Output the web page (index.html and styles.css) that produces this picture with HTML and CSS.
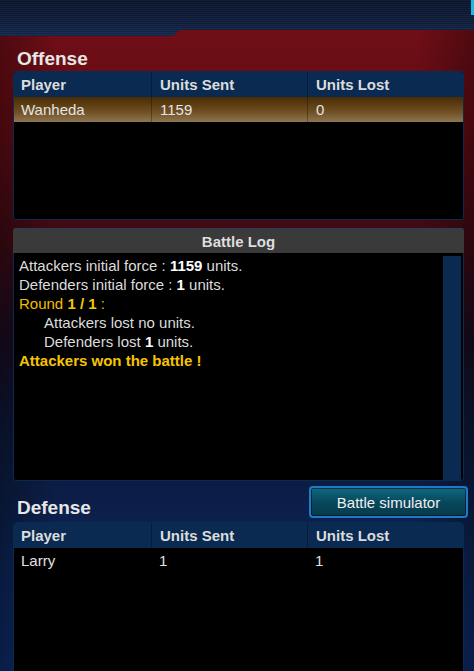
FILE: index.html
```html
<!DOCTYPE html>
<html lang="en">
<head>
    <meta charset="UTF-8">
    <meta name="viewport" content="width=device-width, initial-scale=1.0">
    <title>Battle Report</title>
    <link rel="stylesheet" href="styles.css">
</head>
<body>
    <div class="topbar"><span class="topbar-tab"></span></div>

    <div class="report">
        <h2 class="section-title">Offense</h2>
        <div class="units-table offense">
            <div class="units-row head">
                <div>Player</div>
                <div>Units Sent</div>
                <div>Units Lost</div>
            </div>
            <div class="units-row attacker">
                <div>Wanheda</div>
                <div>1159</div>
                <div>0</div>
            </div>
        </div>

        <div class="battle-log">
            <div class="battle-log-head">Battle Log</div>
            <div class="battle-log-body">
                <div class="log-lines">
                    <p>Attackers initial force : <b>1159</b> units.</p>
                    <p>Defenders initial force : <b>1</b> units.</p>
                    <p class="round">Round <b>1 / 1</b> :</p>
                    <p class="indent">Attackers lost no units.</p>
                    <p class="indent">Defenders lost <b>1</b> units.</p>
                    <p class="result">Attackers won the battle !</p>
                </div>
                <div class="log-scroll"></div>
            </div>
        </div>

        <div class="defense-bar">
            <h2 class="section-title">Defense</h2>
            <button class="sim-button" type="button">Battle simulator</button>
        </div>
        <div class="units-table defense">
            <div class="units-row head">
                <div>Player</div>
                <div>Units Sent</div>
                <div>Units Lost</div>
            </div>
            <div class="units-row">
                <div>Larry</div>
                <div>1</div>
                <div>1</div>
            </div>
        </div>
    </div>
</body>
</html>
```

FILE: styles.css
```css
html, body {
    margin: 0;
    height: 100%;
}
body {
    font-family: "Liberation Sans", Arial, sans-serif;
    color: #e2e2e2;
    overflow: hidden;
    background:
        linear-gradient(to right, rgba(0,0,0,0.3), rgba(0,0,0,0) 12%, rgba(0,0,0,0) 88%, rgba(0,0,0,0.3)),
        linear-gradient(to bottom, #700e16 30px, #600b13 130px, #3a0a14 250px, #180c20 340px, #0c1838 430px, #0c2456 560px, #0c2a66 671px);
}
.topbar {
    position: relative;
    height: 36px;
    background:
        repeating-linear-gradient(to bottom, rgba(255,255,255,0.03) 0 1px, rgba(0,0,0,0.08) 1px 2px),
        linear-gradient(to bottom, #0b1630, #0f1e3c 60%, #15294f);
    clip-path: polygon(0 0, 100% 0, 100% 30px, 180px 30px, 173px 36px, 0 36px);
}
.topbar-tab {
    position: absolute;
    right: 0;
    top: 0;
    width: 3px;
    height: 15px;
    background: #1bb8ea;
}
.report {
    padding: 0 10px 0 13px;
}
.section-title {
    margin: 12px 0 1px 4px;
    font-size: 19px;
    line-height: 22px;
    font-weight: bold;
    color: #e6e6e6;
}
.units-table {
    background: #000;
    border: 1px solid #0b2a52;
    border-radius: 3px;
    overflow: hidden;
    box-sizing: border-box;
}
.units-table.offense {
    height: 149px;
}
.units-table.defense {
    height: 160px;
}
.units-row {
    display: grid;
    grid-template-columns: 137px 156px 1fr;
    height: 25px;
    font-size: 15px;
    line-height: 25px;
}
.units-row div {
    padding-left: 7px;
}
.units-row div + div {
    padding-left: 8px;
}
.units-row.head {
    background: #0a2a52;
    font-weight: bold;
    color: #dcdcdc;
}
.units-row.head div + div,
.units-row.attacker div + div {
    border-left: 1px solid rgba(0,0,0,0.3);
}
.units-row.attacker {
    background: linear-gradient(to bottom, #4a2c04, #6c4c20 55%, #8e7550);
    color: #e4e4e4;
}
.battle-log {
    margin-top: 8px;
    border-radius: 3px;
    overflow: hidden;
}
.battle-log-head {
    height: 25px;
    line-height: 25px;
    background: #3a3a3a;
    border-top: 1px solid #2b3a55;
    box-sizing: border-box;
    text-align: center;
    font-size: 15px;
    font-weight: bold;
    color: #dedede;
}
.battle-log-body {
    display: flex;
    height: 228px;
    background: #000;
    border: 1px solid #0b2a52;
    border-top: none;
    border-radius: 0 0 3px 3px;
    box-sizing: border-box;
    padding: 3px 2px 0 5px;
}
.log-lines {
    flex: 1;
}
.log-lines p {
    margin: 0;
    font-size: 15px;
    line-height: 19px;
    color: #dcdcdc;
}
.log-lines b {
    color: #fff;
}
.log-lines .round {
    color: #f0bc00;
}
.log-lines .round b {
    color: #f6c800;
}
.log-lines .indent {
    padding-left: 25px;
}
.log-lines .result {
    color: #f6c400;
    font-weight: bold;
}
.log-scroll {
    width: 18px;
    background: #0a2a52;
}
.defense-bar {
    display: flex;
    justify-content: space-between;
    align-items: flex-end;
    height: 32px;
    margin: 5px -4px 4px 0;
}
.defense-bar .section-title {
    margin: 0 0 -1px 4px;
}
.sim-button {
    width: 159px;
    height: 32px;
    padding: 0;
    border: 2px solid #1f78c8;
    border-radius: 4px;
    background: linear-gradient(to bottom, #0d6a80, #08485c 50%, #063a4c);
    box-shadow: inset 0 0 0 1px rgba(0,0,0,0.5);
    color: #f0f0f0;
    font-family: "Liberation Sans", Arial, sans-serif;
    font-size: 15px;
}
```
